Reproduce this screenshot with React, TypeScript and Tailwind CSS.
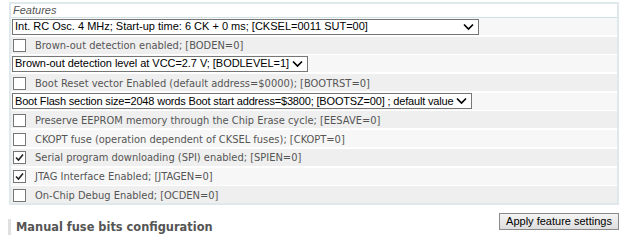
import React from "react";

const ARIAL = { fontFamily: '"Liberation Sans", Arial, sans-serif' };
const VERD = { fontFamily: '"DejaVu Sans Condensed", "DejaVu Sans", Verdana, sans-serif' };
const VERDB = { fontFamily: '"DejaVu Sans", Verdana, sans-serif' };

function Check({ checked }: { checked?: boolean }) {
  return (
    <span className="inline-flex h-[13px] w-[13px] shrink-0 items-center justify-center border border-[#767676] bg-white">
      {checked && (
        <svg width="11" height="11" viewBox="0 0 11 11">
          <path d="M2 5.5 L4.5 8 L9 2.5" fill="none" stroke="#222" strokeWidth="1.6" />
        </svg>
      )}
    </span>
  );
}

function Select({ text, w }: { text: string; w: string }) {
  return (
    <div
      className={`flex h-[16px] items-center justify-between gap-[3px] border border-[#767676] bg-white pl-[2px] pr-[4px] text-[11px] text-black ${w}`}
      style={ARIAL}
    >
      <span className="whitespace-nowrap leading-none">{text}</span>
      <svg width="11" height="8" viewBox="0 0 11 8" className="shrink-0">
        <path d="M1 1.5 L5.5 6 L10 1.5" fill="none" stroke="#000" strokeWidth="1.7" />
      </svg>
    </div>
  );
}

type Row =
  | { kind: "select"; text: string; w: string }
  | { kind: "check"; text: string; checked?: boolean };

const rows: Row[] = [
  { kind: "select", text: "Int. RC Osc. 4 MHz; Start-up time: 6 CK + 0 ms; [CKSEL=0011 SUT=00]", w: "w-[467px]" },
  { kind: "check", text: "Brown-out detection enabled; [BODEN=0]" },
  { kind: "select", text: "Brown-out detection level at VCC=2.7 V; [BODLEVEL=1]", w: "w-auto tracking-[-0.05px]" },
  { kind: "check", text: "Boot Reset vector Enabled (default address=$0000); [BOOTRST=0]" },
  { kind: "select", text: "Boot Flash section size=2048 words Boot start address=$3800; [BOOTSZ=00] ; default value", w: "w-auto tracking-[-0.17px]" },
  { kind: "check", text: "Preserve EEPROM memory through the Chip Erase cycle; [EESAVE=0]" },
  { kind: "check", text: "CKOPT fuse (operation dependent of CKSEL fuses); [CKOPT=0]" },
  { kind: "check", text: "Serial program downloading (SPI) enabled; [SPIEN=0]", checked: true },
  { kind: "check", text: "JTAG Interface Enabled; [JTAGEN=0]", checked: true },
  { kind: "check", text: "On-Chip Debug Enabled; [OCDEN=0]" },
];

export default function App() {
  return (
    <div className="h-[246px] w-[640px] overflow-hidden bg-white pt-[2px]">
      <div className="ml-[9px] w-[610px] border-2 border-[#dfe9eb] bg-white">
        <div className="flex h-[14px] items-center border-b border-[#cfe3e7] pl-[2px] text-[11px] italic text-[#555]" style={ARIAL}>
          Features
        </div>
        <div className="flex flex-col gap-[1.7px]">
          {rows.map((r, i) => (
            <div
              key={i}
              className={`flex h-[17px] items-center ${i % 2 === 0 ? "bg-[#f7f7f7]" : "bg-[#efefef]"}`}
            >
              {r.kind === "select" ? (
                <div className="pl-[1px]">
                  <Select text={r.text} w={r.w} />
                </div>
              ) : (
                <div className="flex items-center pl-[2px] pt-[1px]">
                  <Check checked={r.checked} />
                  <span className="ml-[9px] whitespace-nowrap text-[11px] leading-[13px] text-[#555]" style={VERD}>
                    {r.text}
                  </span>
                </div>
              )}
            </div>
          ))}
        </div>
      </div>
      <div className="flex items-start justify-between">
        <div className="mt-[14px] ml-[8px] flex h-[16px] items-center border-l-[3px] border-[#e0e0e0] pl-[5px]">
          <span className="whitespace-nowrap text-[11.4px] font-bold text-[#555]" style={VERDB}>
            Manual fuse bits configuration
          </span>
        </div>
        <button
          className="mt-[8px] mr-[21px] h-[17px] w-[120px] border border-[#8a8a8a] bg-gradient-to-b from-[#f4f4f4] to-[#dedede] text-[11px] leading-none text-black"
          style={ARIAL}
        >
          Apply feature settings
        </button>
      </div>
    </div>
  );
}
